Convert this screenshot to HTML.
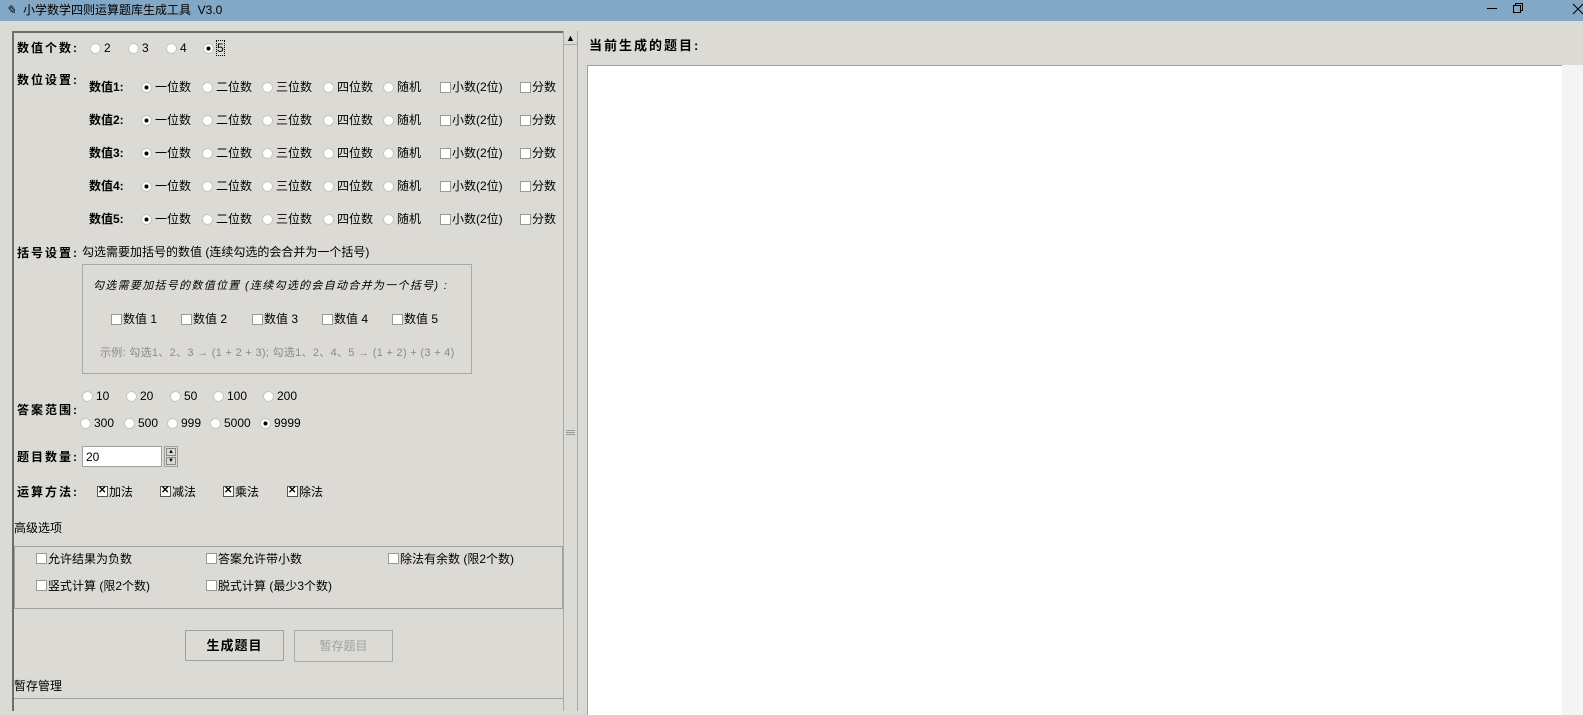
<!DOCTYPE html>
<html><head><meta charset="utf-8">
<style>
*{margin:0;padding:0;box-sizing:border-box}
body{width:1583px;height:708px;background:#dcdad5;position:relative;overflow:hidden;font-family:"Liberation Sans","Noto Sans CJK SC",sans-serif;font-size:12px;color:#000}
.a{position:absolute;white-space:nowrap;line-height:14px}
.b{font-weight:bold}
.ls{letter-spacing:2px}
.r{position:absolute;width:11px;height:11px;border-radius:50%;background:#fff;border:1px solid #c8c6c0}
.r.on::after{content:"";position:absolute;left:3px;top:3px;width:3px;height:3px;border-radius:50%;background:#000;box-shadow:0 0 0 .5px #000}
.c{position:absolute;width:11px;height:11px;background:#fff;border:1px solid #999}
.c.x{border-color:#555}
.c.x::after{content:"✕";position:absolute;left:0;top:-3px;font-size:10px;font-weight:bold;line-height:14px}
</style></head><body>
<!-- title bar -->
<div class="a" style="left:0;top:0;width:1583px;height:21px;background:#83a8c5"></div>
<div class="a" style="left:6px;top:3px;font-size:12px;font-style:italic">✎</div>
<div class="a" style="left:23px;top:3px">小学数学四则运算题库生成工具&nbsp; V3.0</div>
<div class="a" style="left:1487px;top:8px;width:10px;height:1px;background:#000"></div>
<div class="a" style="left:1515px;top:3px;width:8px;height:8px;border:1px solid #000"></div>
<div class="a" style="left:1513px;top:5px;width:8px;height:8px;border:1px solid #000;background:#83a8c5"></div>
<svg class="a" style="left:1572px;top:3px" width="12" height="12"><path d="M1 1L11 11M11 1L1 11" stroke="#000" stroke-width="1"/></svg>
<!-- left panel -->
<div class="a" style="left:12px;top:31px;width:552px;height:680px;border-left:2px solid #6e6e6e;border-top:2px solid #6e6e6e"></div>
<div class="a" style="left:563px;top:31px;width:15px;height:680px;background:#dcdad5;border-left:1px solid #a8a8a8;border-right:1px solid #a8a8a8"></div>
<div class="a" style="left:564px;top:32px;width:13px;height:13px;font-size:9px;text-align:center;line-height:13px;border-bottom:1px solid #aaa">▲</div>
<div class="a" style="left:566px;top:430px;width:9px;height:1px;background:#999;box-shadow:0 2px #999,0 4px #999"></div>

<div class="a b ls" style="left:17px;top:41px">数值个数:</div>
<div class="r" style="left:90px;top:43px"></div><div class="a" style="left:104px;top:41px">2</div>
<div class="r" style="left:128px;top:43px"></div><div class="a" style="left:142px;top:41px">3</div>
<div class="r" style="left:166px;top:43px"></div><div class="a" style="left:180px;top:41px">4</div>
<div class="r on" style="left:203px;top:43px"></div><div class="a" style="left:217px;top:41px;outline:1px dotted #000">5</div>

<div class="a b ls" style="left:17px;top:73px">数位设置:</div>

<div id="rows"></div>
<script>
var h='';
for(var i=0;i<5;i++){var y=80+i*33;
h+='<div class="a b" style="left:89px;top:'+y+'px">数值'+(i+1)+':</div>';
var cols=[[141,'一位数',1],[202,'二位数'],[262,'三位数'],[323,'四位数'],[383,'随机']];
cols.forEach(function(c){h+='<div class="r'+(c[2]?' on':'')+'" style="left:'+c[0]+'px;top:'+(y+2)+'px"></div><div class="a" style="left:'+(c[0]+14)+'px;top:'+y+'px">'+c[1]+'</div>';});
h+='<div class="c" style="left:440px;top:'+(y+2)+'px"></div><div class="a" style="left:452px;top:'+y+'px">小数(2位)</div>';
h+='<div class="c" style="left:520px;top:'+(y+2)+'px"></div><div class="a" style="left:532px;top:'+y+'px">分数</div>';}
document.getElementById('rows').innerHTML=h;
</script>

<div class="a b ls" style="left:17px;top:246px">括号设置:</div>
<div class="a" style="left:82px;top:245px">勾选需要加括号的数值 (连续勾选的会合并为一个括号)</div>
<div class="a" style="left:82px;top:264px;width:390px;height:110px;border:1px solid #a8a8a8"></div>
<div class="a" style="left:93px;top:279px;font-style:italic;font-size:11px;letter-spacing:1.3px">勾选需要加括号的数值位置 (连续勾选的会自动合并为一个括号) :</div>
<div class="c" style="left:111px;top:314px"></div><div class="a" style="left:123px;top:312px">数值 1</div>
<div class="c" style="left:181px;top:314px"></div><div class="a" style="left:193px;top:312px">数值 2</div>
<div class="c" style="left:252px;top:314px"></div><div class="a" style="left:264px;top:312px">数值 3</div>
<div class="c" style="left:322px;top:314px"></div><div class="a" style="left:334px;top:312px">数值 4</div>
<div class="c" style="left:392px;top:314px"></div><div class="a" style="left:404px;top:312px">数值 5</div>
<div class="a" style="left:100px;top:346px;color:#8a8a8a;font-size:11px;letter-spacing:0.3px">示例: 勾选1、2、3 → (1 + 2 + 3); 勾选1、2、4、5 → (1 + 2) + (3 + 4)</div>

<div class="a b ls" style="left:17px;top:403px">答案范围:</div>
<div class="r" style="left:82px;top:391px"></div><div class="a" style="left:96px;top:389px">10</div>
<div class="r" style="left:126px;top:391px"></div><div class="a" style="left:140px;top:389px">20</div>
<div class="r" style="left:170px;top:391px"></div><div class="a" style="left:184px;top:389px">50</div>
<div class="r" style="left:213px;top:391px"></div><div class="a" style="left:227px;top:389px">100</div>
<div class="r" style="left:263px;top:391px"></div><div class="a" style="left:277px;top:389px">200</div>
<div class="r" style="left:80px;top:418px"></div><div class="a" style="left:94px;top:416px">300</div>
<div class="r" style="left:124px;top:418px"></div><div class="a" style="left:138px;top:416px">500</div>
<div class="r" style="left:167px;top:418px"></div><div class="a" style="left:181px;top:416px">999</div>
<div class="r" style="left:210px;top:418px"></div><div class="a" style="left:224px;top:416px">5000</div>
<div class="r on" style="left:260px;top:418px"></div><div class="a" style="left:274px;top:416px">9999</div>

<div class="a b ls" style="left:17px;top:450px">题目数量:</div>
<div class="a" style="left:82px;top:446px;width:80px;height:21px;background:#fff;border:1px solid #a0a0a0"></div>
<div class="a" style="left:86px;top:450px">20</div>
<div class="a" style="left:164px;top:446px;width:14px;height:21px;border:1px solid #a0a0a0;background:#dcdad5"></div>
<div class="a" style="left:166px;top:448px;width:10px;height:8px;border:1px solid #888;font-size:6px;line-height:6px;text-align:center">▲</div>
<div class="a" style="left:166px;top:457px;width:10px;height:8px;border:1px solid #888;font-size:6px;line-height:6px;text-align:center">▼</div>

<div class="a b ls" style="left:17px;top:485px">运算方法:</div>
<div class="c x" style="left:97px;top:486px"></div><div class="a" style="left:109px;top:485px">加法</div>
<div class="c x" style="left:160px;top:486px"></div><div class="a" style="left:172px;top:485px">减法</div>
<div class="c x" style="left:223px;top:486px"></div><div class="a" style="left:235px;top:485px">乘法</div>
<div class="c x" style="left:287px;top:486px"></div><div class="a" style="left:299px;top:485px">除法</div>

<div class="a" style="left:14px;top:521px">高级选项</div>
<div class="a" style="left:14px;top:546px;width:549px;height:63px;border:1px solid #a0a0a0"></div>
<div class="c" style="left:36px;top:553px"></div><div class="a" style="left:48px;top:552px">允许结果为负数</div>
<div class="c" style="left:206px;top:553px"></div><div class="a" style="left:218px;top:552px">答案允许带小数</div>
<div class="c" style="left:388px;top:553px"></div><div class="a" style="left:400px;top:552px">除法有余数 (限2个数)</div>
<div class="c" style="left:36px;top:580px"></div><div class="a" style="left:48px;top:579px">竖式计算 (限2个数)</div>
<div class="c" style="left:206px;top:580px"></div><div class="a" style="left:218px;top:579px">脱式计算 (最少3个数)</div>

<div class="a b" style="left:185px;top:630px;width:99px;height:31px;border:1px solid #a0a0a0;text-align:center;line-height:29px;font-size:13px;letter-spacing:1px">生成题目</div>
<div class="a" style="left:294px;top:630px;width:99px;height:32px;border:1px solid #a8a8a8;text-align:center;line-height:30px;color:#a0a0a0">暂存题目</div>
<div class="a" style="left:14px;top:679px">暂存管理</div>
<div class="a" style="left:14px;top:698px;width:549px;height:1px;background:#a0a0a0"></div>

<!-- right -->
<div class="a b" style="left:589px;top:39px;font-size:13px;letter-spacing:2px">当前生成的题目:</div>
<div class="a" style="left:587px;top:65px;width:975px;height:650px;background:#fff;border-top:1px solid #a0a0a0;border-left:1px solid #a0a0a0"></div>
<div class="a" style="left:1562px;top:65px;width:21px;height:650px;background:#f4f4f4"></div>
</body></html>
